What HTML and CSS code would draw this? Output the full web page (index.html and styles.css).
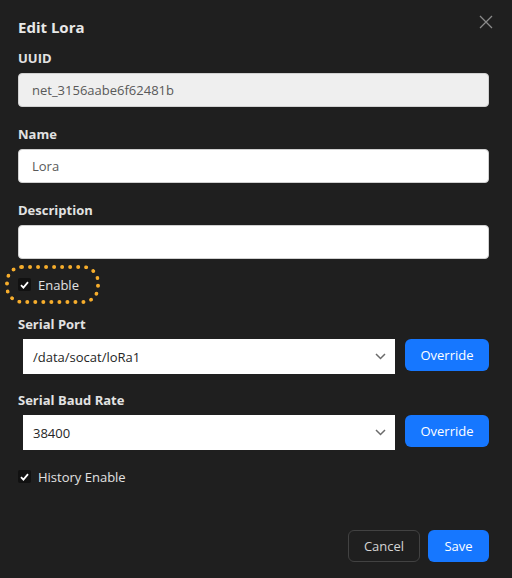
FILE: index.html
```html
<!DOCTYPE html>
<html>
<head>
<meta charset="utf-8">
<link rel="stylesheet" href="styles.css">
</head>
<body>
<div class="dialog">
  <div class="header">
    <div class="title">Edit Lora</div>
    <svg class="close" width="14" height="14" viewBox="0 0 14 14"><path d="M1 1L13 13M13 1L1 13" stroke="#8a8a8a" stroke-width="1.3" fill="none"/></svg>
  </div>

  <div class="field">
    <div class="label">UUID</div>
    <div class="input disabled">net_3156aabe6f62481b</div>
  </div>
  <div class="field">
    <div class="label">Name</div>
    <div class="input">Lora</div>
  </div>
  <div class="field">
    <div class="label">Description</div>
    <div class="input"></div>
  </div>

  <div class="check-row first">
    <label class="check focused">
      <span class="box"><svg width="9" height="8" viewBox="0 0 9 8"><path d="M1 4.2L3.4 6.6L8 1.2" stroke="#fff" stroke-width="1.8" fill="none"/></svg></span>
      <span class="check-text">Enable</span>
    </label>
  </div>

  <div class="field sel-field">
    <div class="label">Serial Port</div>
    <div class="sel-row">
      <div class="select"><span>/data/socat/loRa1</span><svg width="11" height="7" viewBox="0 0 11 7"><path d="M1 1L5.5 5.5L10 1" stroke="#6b6b6b" stroke-width="1.5" fill="none"/></svg></div>
      <button class="btn primary override">Override</button>
    </div>
  </div>
  <div class="field sel-field">
    <div class="label">Serial Baud Rate</div>
    <div class="sel-row">
      <div class="select"><span>38400</span><svg width="11" height="7" viewBox="0 0 11 7"><path d="M1 1L5.5 5.5L10 1" stroke="#6b6b6b" stroke-width="1.5" fill="none"/></svg></div>
      <button class="btn primary override">Override</button>
    </div>
  </div>

  <div class="check-row second">
    <label class="check">
      <span class="box"><svg width="9" height="8" viewBox="0 0 9 8"><path d="M1 4.2L3.4 6.6L8 1.2" stroke="#fff" stroke-width="1.8" fill="none"/></svg></span>
      <span class="check-text">History Enable</span>
    </label>
  </div>

  <div class="footer">
    <button class="btn cancel">Cancel</button>
    <button class="btn primary save">Save</button>
  </div>
</div>
</body>
</html>
```

FILE: styles.css
```css
* { box-sizing: border-box; }
html, body { margin: 0; padding: 0; }
body {
  background: #1f1f1f;
  font-family: "Open Sans", "Noto Sans", sans-serif;
  color: #e6e6e6;
  width: 512px;
  height: 578px;
  overflow: hidden;
}
.dialog {
  padding: 15px 23px 0 18px;
  display: flex;
  flex-direction: column;
}
.header {
  display: flex;
  justify-content: space-between;
  align-items: flex-start;
  height: 24px;
}
.title {
  font-size: 15px;
  font-weight: 700;
  line-height: 24px;
  color: #e8e8e8;
}
.close {
  margin-top: 0px;
  margin-right: -4px;
}
.field {
  display: flex;
  flex-direction: column;
  margin-top: 9px;
}
.field + .field { margin-top: 17px; }
.label {
  font-size: 13px;
  font-weight: 700;
  line-height: 20px;
  color: #e2e2e2;
  margin-bottom: 5px;
}
.input {
  height: 34px;
  border-radius: 4px;
  background: #fff;
  border: 1px solid #d0d0d0;
  font-size: 13px;
  line-height: 32px;
  padding: 0 13px;
  color: #595959;
}
.input.disabled {
  background: #efefef;
}
.check-row {
  display: flex;
}
.check-row.first { margin-top: 19px; }
.check-row.second { margin-top: 20px; }
.check {
  display: inline-flex;
  align-items: center;
  height: 13px;
  font-size: 13px;
  color: #e2e2e2;
}
.check.focused {
  outline: 4px dotted #f6ad2c;
  outline-offset: 9px;
  border-radius: 4px;
  padding-right: 8px;
}
.box {
  width: 13px;
  height: 13px;
  border-radius: 2px;
  background: #111;
  display: flex;
  align-items: center;
  justify-content: center;
  margin-right: 7px;
}
.first + .sel-field { margin-top: 23px; }
.sel-field + .sel-field { margin-top: 16px; }
.sel-field .label { margin-bottom: 5px; }
.sel-row {
  display: flex;
  align-items: flex-start;
  padding-left: 5px;
  gap: 10px;
}
.select {
  flex: 1;
  height: 35px;
  background: #fff;
  display: flex;
  align-items: center;
  justify-content: space-between;
  padding: 0 9px 0 10px;
  font-size: 13px;
  color: #262626;
}
.btn {
  font-family: inherit;
  font-size: 13px;
  border-radius: 6px;
  cursor: pointer;
}
.primary {
  background: #1677ff;
  color: #fff;
  border: none;
}
.override {
  width: 84px;
  height: 32px;
}
.footer {
  display: flex;
  justify-content: flex-end;
  gap: 8px;
  margin-top: 47px;
}
.cancel {
  width: 72px;
  height: 32px;
  background: transparent;
  border: 1px solid #424242;
  color: #d4d4d4;
}
.save {
  width: 61px;
  height: 32px;
}
```
